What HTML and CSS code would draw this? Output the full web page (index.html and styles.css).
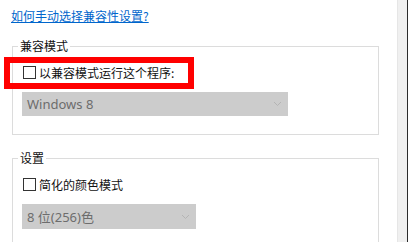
FILE: index.html
```html
<!DOCTYPE html>
<html lang="zh-CN">
<head>
<meta charset="utf-8">
<link rel="stylesheet" href="styles.css">
</head>
<body>
<div class="window">
  <div class="content">
    <a class="help-link" href="#">如何手动选择兼容性设置?</a>
    <fieldset class="group group-compat">
      <legend>兼容模式</legend>
      <div class="check-row highlighted">
        <span class="checkbox"></span>
        <span class="check-label">以兼容模式运行这个程序:</span>
        <span class="highlight"></span>
      </div>
      <div class="select select-wide">
        <span class="select-text">Windows 8</span>
        <svg class="chevron" width="9" height="6" viewBox="0 0 9 6"><path d="M1 1 L4.5 4.5 L8 1" fill="none" stroke="#b4b4b4" stroke-width="1"/></svg>
      </div>
    </fieldset>
    <fieldset class="group group-settings">
      <legend>设置</legend>
      <div class="check-row">
        <span class="checkbox"></span>
        <span class="check-label">简化的颜色模式</span>
      </div>
      <div class="select select-narrow">
        <span class="select-text">8 位(256)色</span>
        <svg class="chevron" width="9" height="6" viewBox="0 0 9 6"><path d="M1 1 L4.5 4.5 L8 1" fill="none" stroke="#b4b4b4" stroke-width="1"/></svg>
      </div>
    </fieldset>
  </div>
  <div class="side-strip"></div>
  <div class="side-edge"></div>
</div>
</body>
</html>
```
FILE: styles.css
```css
html, body {
  margin: 0;
  padding: 0;
  background: #ffffff;
  overflow: hidden;
}
body {
  font-family: "Noto Sans CJK SC", "Noto Sans", sans-serif;
  font-size: 12px;
  line-height: 16px;
  color: #1a1a1a;
}
.window {
  display: flex;
  width: 408px;
  height: 242px;
  overflow: hidden;
}
.content {
  width: 397px;
  flex: none;
  padding: 8px 0 0 12px;
  box-sizing: border-box;
  display: flex;
  flex-direction: column;
  align-items: flex-start;
}
.side-strip {
  width: 10px;
  flex: none;
  background: #f0f0f0;
  border-left: 1px solid #e6e6e6;
  box-sizing: border-box;
}
.side-edge {
  width: 1px;
  flex: none;
  background: #2b2b2b;
}
.help-link {
  color: #0066cc;
  text-decoration: underline;
  margin-left: -1px;
}
.group {
  width: 367px;
  box-sizing: border-box;
  margin: 14px 0 0 0;
  padding: 0 0 18px 9px;
  border: 1px solid #dcdcdc;
  min-width: 0;
}
.group legend {
  padding: 0 2px;
  margin-left: -4px;
  line-height: 16px;
  color: #111111;
}
.group-settings {
  margin-top: 15px;
  padding-bottom: 40px;
}
.check-row {
  position: relative;
  display: flex;
  align-items: center;
  height: 20px;
  margin-top: 9px;
  gap: 3px;
}
.checkbox {
  width: 13px;
  height: 13px;
  box-sizing: border-box;
  border: 1px solid #333333;
  background: #ffffff;
  flex: none;
  margin-top: -2px;
  margin-left: 1px;
}
.check-label {
  color: #111111;
}
.highlight {
  position: absolute;
  left: -18px;
  top: -6px;
  width: 190px;
  height: 32px;
  box-sizing: border-box;
  border: 6px solid #ff0000;
  pointer-events: none;
}
.select {
  display: flex;
  align-items: center;
  justify-content: space-between;
  height: 24px;
  margin-top: 9px;
  padding: 0 6px 0 5px;
  box-sizing: border-box;
  background: #cccccc;
  color: #6d6d6d;
}
.select-wide {
  width: 266px;
}
.select-narrow {
  width: 174px;
  height: 25px;
}
.select-text {
  font-family: "Noto Sans", "Noto Sans CJK SC", sans-serif;
  font-size: 13px;
}
.chevron {
  display: block;
}
```
